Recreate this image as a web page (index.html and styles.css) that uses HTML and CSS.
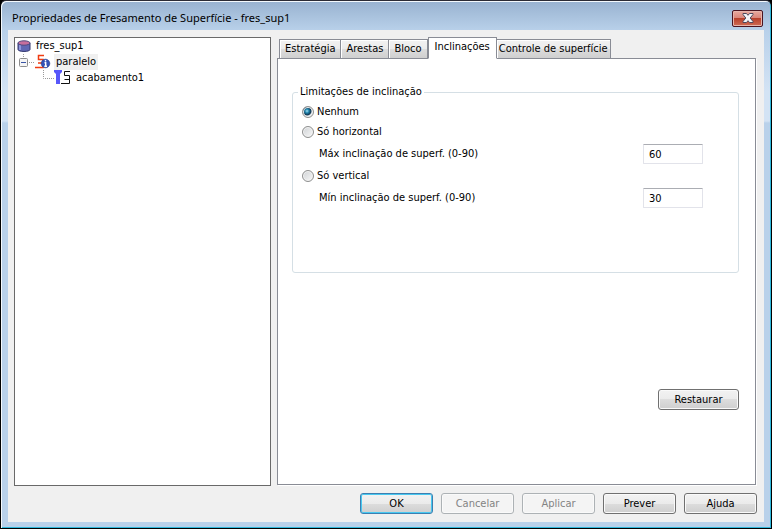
FILE: index.html
```html
<!DOCTYPE html>
<html lang="pt-BR">
  <head>
    <meta charset="utf-8">
    <title>Propriedades de Fresamento de Superfície - fres_sup1</title>
    <link rel="stylesheet" href="styles.css">
  </head>
  <body>
    <div class="window">
      <header class="titlebar">
        <h1>Propriedades de Fresamento de Superfície - fres_sup1</h1>
        <button class="close" type="button" aria-label="Fechar">
          <svg width="12" height="10" viewBox="0 0 12 10">
            <path d="M1 .5h3.500L6 2.300 7.500 .5H11v1L8.200 5 11 8.500v1H7.500L6 7.700 4.500 9.500H1v-1L3.800 5 1 1.500z" fill="#f4f4f8" stroke="#4d4a5e"/>
          </svg>
        </button>
      </header>

      <form class="client">
        <main>
          <ul class="tree">
            <li>
              <svg width="14" height="12" viewBox="0 0 14 12">
                <path d="M1 3v6.500c0 2.600 12 2.600 12 0V3z" fill="#6168b4" stroke="#34386f"/>
                <path d="M3 5v5" stroke="#8f96dc" stroke-width="2"/>
                <ellipse cx="7" cy="3" rx="6" ry="2.200" fill="#c66f9d" stroke="#50497f"/>
              </svg>
              <span>fres_sup1</span>
            </li>
            <li class="level-1">
              <svg width="34" height="16" viewBox="0 0 34 16">
                <path d="M6.500 0v3M12 8.500h5" stroke="#999" stroke-dasharray="1 1"/>
                <rect x="2.500" y="4.500" width="8" height="8" rx="1" fill="#f5f5f5" stroke="#8d8d8d"/>
                <path d="M4 8.500h5" stroke="#3a55a5"/>
                <path d="M27 1.500h-5.500v4H26v3.500h-5M26 9v4.500h-8" fill="none" stroke="#f03c12" stroke-width="1.500"/>
                <circle cx="28.500" cy="9.500" r="4.300" fill="#3453b8" stroke="#233a86" stroke-width=".6"/>
                <path d="M28.500 6v1.500M27.500 8.800h1.200v3.500M27.300 12.300h2.700" fill="none" stroke="#fff" stroke-width="1.400"/>
              </svg>
              <span class="selected">paralelo</span>
            </li>
            <li class="level-2">
              <svg width="29" height="16" viewBox="0 0 29 16">
                <path d="M1.500 0v8.500H13" fill="none" stroke="#999" stroke-dasharray="1 1"/>
                <path d="M12 0h8v2l-2 2v10h-4V4l-2-2z" fill="#5757fa"/>
                <path d="M28 1.500h-5.500v4h5v4h-5M27.500 9v4.500H19" fill="none" stroke="#111"/>
              </svg>
              <span>acabamento1</span>
            </li>
          </ul>

          <section class="pages">
            <nav class="tabs">
              <button type="button">Estratégia</button>
              <button type="button">Arestas</button>
              <button type="button">Bloco</button>
              <button type="button" class="active">Inclinações</button>
              <button type="button">Controle de superfície</button>
            </nav>
            <div class="page">
              <fieldset>
                <legend>Limitações de inclinação</legend>
                <label class="option"><input type="radio" name="limit" checked> Nenhum</label>
                <label class="option"><input type="radio" name="limit"> Só horizontal</label>
                <div class="field">
                  <label for="max">Máx inclinação de superf. (0-90)</label>
                  <input id="max" type="text" value="60">
                </div>
                <label class="option"><input type="radio" name="limit"> Só vertical</label>
                <div class="field">
                  <label for="min">Mín inclinação de superf. (0-90)</label>
                  <input id="min" type="text" value="30">
                </div>
              </fieldset>
              <button class="btn reset" type="reset">Restaurar</button>
            </div>
          </section>
        </main>

        <footer>
          <button class="btn default" type="submit">OK</button>
          <button class="btn" type="button" disabled>Cancelar</button>
          <button class="btn" type="button" disabled>Aplicar</button>
          <button class="btn" type="button">Prever</button>
          <button class="btn" type="button">Ajuda</button>
        </footer>
      </form>
    </div>
  </body>
</html>
```
FILE: styles.css
```css
* {
  box-sizing: border-box;
  margin: 0;
  padding: 0;
}
body {
  background: black;
}
body, button, input {
  color: black;
  font-family: "DejaVu Sans Condensed", "Noto Sans", sans-serif;
  font-size: 11px;
  line-height: 14px;
}
.window {
  display: flex;
  flex-direction: column;
  min-height: 100vh;
  padding: 0 6px 6px;
  border: 1px solid black;
  border-top-color: #2b2b35;
  border-radius: 6px 6px 0 0;
  background: linear-gradient(#98b2d0, #b9d1ea 30px, #d3e3f4 90px, #d3e3f4 120px, #b9d1ea 122px);
  box-shadow: inset 1px 1px #f4f9fd, inset -1px -1px #2fb8dc;
}
.titlebar {
  display: flex;
  align-items: center;
  justify-content: space-between;
  height: 29px;
  padding: 5px 2px 0 5px;
}
.titlebar h1 {
  font-family: "Noto Sans", sans-serif;
  font-size: 11px;
  font-weight: normal;
}
.close {
  display: flex;
  align-items: center;
  justify-content: center;
  width: 31px;
  height: 17px;
  border: 1px solid #4a1420;
  border-radius: 2px;
  background: linear-gradient(#e9aaa0, #d98478 48%, #b8402b 50%, #cf6c55);
  box-shadow: inset 0 0 0 1px #e6b5ac;
}
.client {
  display: flex;
  flex: 1;
  flex-direction: column;
  margin: 0 1px;
  padding: 7px 6px 8px;
  background: #f0f0f0;
}
main {
  display: flex;
  flex: 1;
  gap: 6px;
}
.tree {
  width: 35%;
  max-width: 257px;
  border: 1px solid #696969;
  background: white;
  list-style: none;
}
.tree li {
  display: flex;
  align-items: center;
  height: 16px;
  padding-left: 2px;
  gap: 3px;
}
.tree .level-2 {
  padding-left: 27px;
}
.tree span {
  padding: 1px 2px;
}
.tree .selected {
  background: #f0f0f0;
}
.pages {
  display: flex;
  flex: 1;
  flex-direction: column;
}
.tabs {
  display: flex;
  align-items: flex-end;
  height: 22px;
  padding-left: 2px;
}
.tabs button {
  height: 20px;
  padding: 0 5px;
  border: 1px solid #898c95;
  border-left-width: 0;
  background: linear-gradient(#f2f2f2, #ebebeb 50%, #dddddd 50%, #cfcfcf);
  box-shadow: inset 1px 1px white;
  white-space: nowrap;
}
.tabs button:first-child {
  border-left-width: 1px;
}
.tabs button:last-child {
  padding: 0 2px;
}
.tabs .active {
  height: 22px;
  padding: 0 6px 2px;
  border-left-width: 1px;
  border-bottom-color: white;
  background: white;
}
.page {
  display: flex;
  flex: 1;
  flex-direction: column;
  align-items: flex-end;
  justify-content: space-between;
  margin: -1px 2px 1px 0;
  padding: 26px 16px 74px 14px;
  border: 1px solid #898c95;
  background: white;
  box-shadow: 1px 1px white;
}
.tabs .active {
  position: relative;
  z-index: 1;
}
fieldset {
  width: 100%;
  min-height: 188px;
  padding: 3px 35px 0 9px;
  border: 1px solid #d5dfe5;
  border-radius: 3px;
}
legend {
  margin-left: -4px;
  padding: 0 2px;
}
.option {
  display: flex;
  align-items: center;
  height: 20px;
  gap: 3px;
}
.option input {
  width: 12px;
  height: 12px;
  appearance: none;
  border: 1px solid #8e8f8f;
  border-radius: 50%;
  background: linear-gradient(135deg, #cfd2d5, #f8f8f8);
  box-shadow: inset 0 0 0 1px #f4f4f4;
}
.option input:checked {
  background: radial-gradient(circle at 4px 4px, #a5e3f5, #1b7fa8 2px, #12344f 4px, #dfe5e9 5px);
}
.field {
  display: flex;
  align-items: center;
  justify-content: space-between;
  height: 24px;
  padding-left: 17px;
}
.field input {
  width: 60px;
  height: 20px;
  padding: 0 5px;
  border: 1px solid #e2e3ea;
  border-top-color: #abadb3;
  border-radius: 1px;
}
.btn {
  width: 73px;
  height: 21px;
  border: 1px solid #707070;
  border-radius: 3px;
  background: linear-gradient(#f2f2f2, #ebebeb 50%, #dddddd 50%, #cfcfcf);
  box-shadow: inset 0 0 0 1px #fafafa;
}
.btn:disabled {
  border-color: #adb2b5;
  background: #f4f4f4;
  color: #838383;
}
.default {
  border-color: #3c7fb1;
  box-shadow: inset 0 0 0 1px #48c8f0;
}
.reset {
  width: 81px;
}
footer {
  display: flex;
  justify-content: flex-end;
  padding: 7px 1px 0 0;
  gap: 8px;
}
```
